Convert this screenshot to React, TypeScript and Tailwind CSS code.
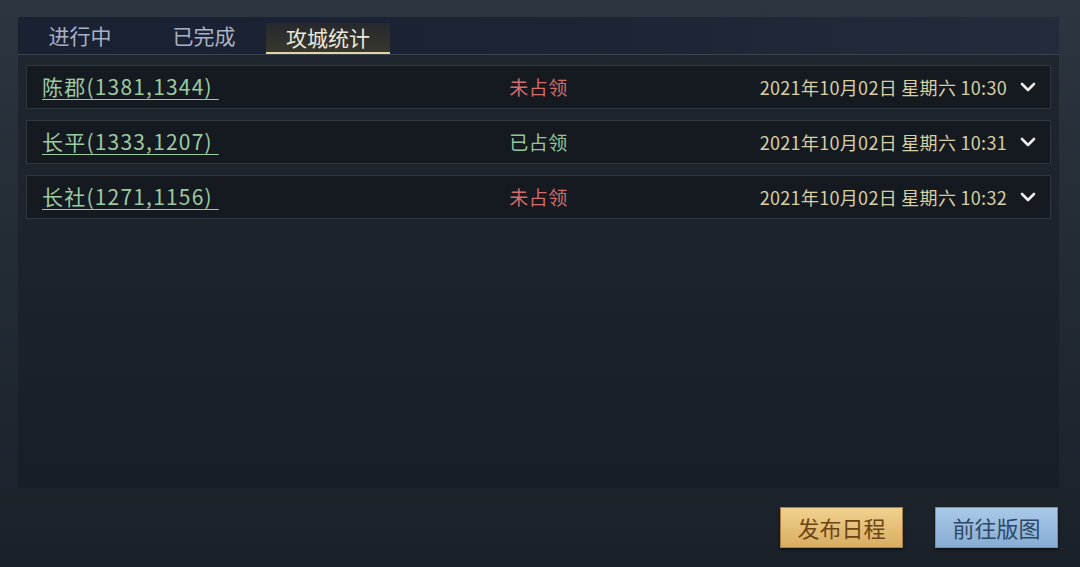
import { ChevronDown } from "lucide-react";

type Row = { name: string; taken: boolean; time: string };

const rows: Row[] = [
  { name: "陈郡(1381,1344)", taken: false, time: "2021年10月02日 星期六 10:30" },
  { name: "长平(1333,1207)", taken: true, time: "2021年10月02日 星期六 10:31" },
  { name: "长社(1271,1156)", taken: false, time: "2021年10月02日 星期六 10:32" },
];

const tabs = ["进行中", "已完成", "攻城统计"];

const font = { fontFamily: '"Noto Sans CJK SC", "Noto Sans", sans-serif' };

export default function App() {
  return (
    <div
      className="w-[1080px] h-[567px] overflow-hidden flex flex-col bg-gradient-to-b from-[#2c3640] via-[#222a33] to-[#1b2129] pt-[17px] pl-[18px] pr-[21px]"
      style={font}
    >
      {/* panel */}
      <div className="h-[471px] flex flex-col bg-gradient-to-b from-[#1f262e] via-[#1c232b] to-[#181e25]">
        {/* tab bar */}
        <div className="h-[38px] flex bg-gradient-to-r from-[#1a2132] via-[#1c2334] to-[#232c3c] border-b border-[#3a4451]">
          {tabs.map((t, i) => (
            <div
              key={t}
              className={
                i === 2
                  ? "w-[124px] mt-[6px] flex items-center justify-center text-[21px] text-[#ece8d8] bg-gradient-to-b from-[#26282c] to-[#38372f] border-b-2 border-[#e2d6a4]"
                  : "w-[124px] flex items-center justify-center text-[21px] text-[#a9b1c5]"
              }
            >
              {t}
            </div>
          ))}
        </div>

        {/* list */}
        <div className="flex flex-col gap-[11px] pt-[10px] px-[8px]">
          {rows.map((r) => (
            <div
              key={r.name}
              className="h-[44px] grid grid-cols-[1fr_auto_1fr] items-center pl-[15px] pr-[10px] bg-[#151a20] border border-[#2e363f]"
            >
              <span className="text-[21px] tracking-[1.2px] text-[#9ccba2] underline underline-offset-[4px] decoration-1 whitespace-pre">
                {r.name + " "}
              </span>
              <span
                className={
                  r.taken
                    ? "mr-[5px] text-[19px] tracking-[0.5px] text-[#93c69c]"
                    : "mr-[5px] text-[19px] tracking-[0.5px] text-[#d46b6c]"
                }
              >
                {r.taken ? "已占领" : "未占领"}
              </span>
              <div className="flex items-center justify-end gap-[9px]">
                <span className="text-[18px] tracking-[0.3px] text-[#d8cfa2]">{r.time}</span>
                <ChevronDown className="w-[24px] h-[24px] text-[#eeeeee]" strokeWidth={2.6} />
              </div>
            </div>
          ))}
        </div>
      </div>

      {/* buttons */}
      <div className="flex justify-end gap-[32px] mt-[19px] mr-[1px]">
        <button className="w-[123px] h-[41px] flex items-center justify-center text-[22px] text-[#6b4515] bg-gradient-to-b from-[#f1d18f] to-[#d8ad62] border border-[#a98040] shadow-[0_2px_3px_rgba(0,0,0,0.5)]">
          发布日程
        </button>
        <button className="w-[123px] h-[41px] flex items-center justify-center text-[22px] text-[#2d4966] bg-gradient-to-b from-[#a9c9e8] to-[#87add3] border border-[#6f93b8] shadow-[0_2px_3px_rgba(0,0,0,0.5)]">
          前往版图
        </button>
      </div>
    </div>
  );
}
